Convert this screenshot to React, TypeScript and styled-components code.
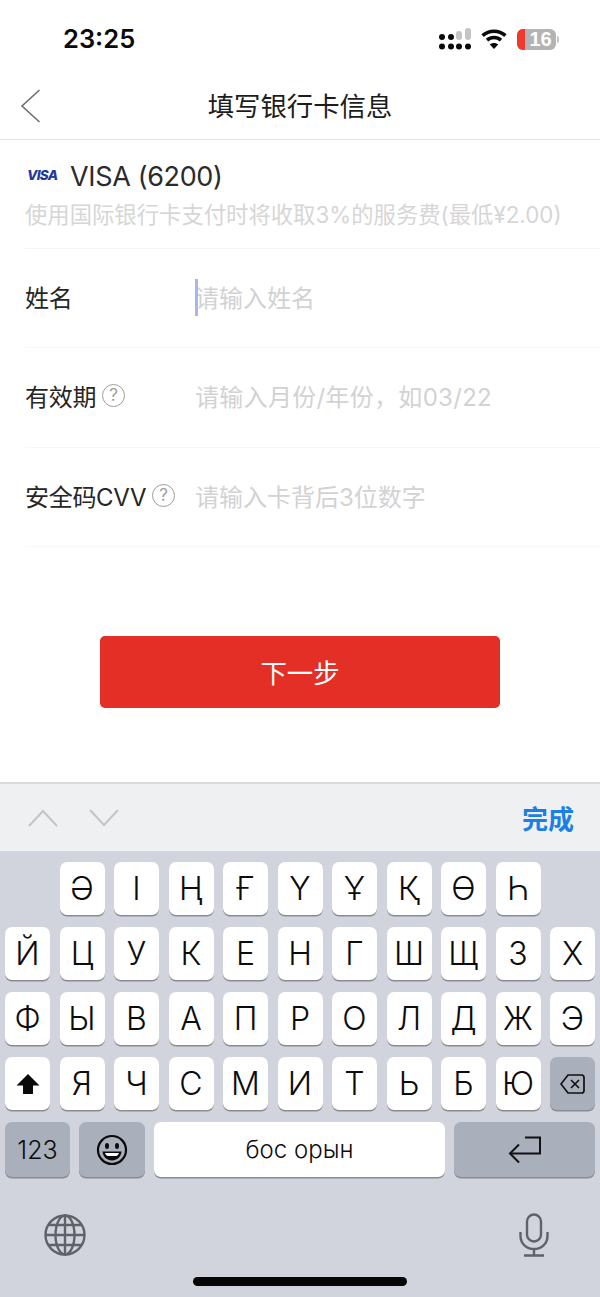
import styled, { createGlobalStyle } from 'styled-components';

const GlobalStyle = createGlobalStyle`
    html, body {
        margin: 0;
        padding: 0;
        background: #fff;
    }
    * {
        box-sizing: border-box;
    }
`;

const cjk = `Inter, "Noto Sans CJK SC", sans-serif`;
const keyFont = `Inter, Roboto, "Noto Sans", sans-serif`;

const Page = styled.div`
    width: 600px;
    height: 1297px;
    display: flex;
    flex-direction: column;
    overflow: hidden;
    background: #fff;
    font-family: ${cjk};
`;

const StatusBar = styled.div`
    height: 72px;
    flex: none;
    display: flex;
    align-items: center;
    justify-content: space-between;
    padding: 6px 41px 0 63px;
`;
const Time = styled.div`
    font: 600 25.5px/1 ${keyFont};
    color: #0a0a0a;
`;
const StatusIcons = styled.div`
    display: flex;
    align-items: center;
    gap: 10px;
`;
const Battery = styled.div`
    width: 39px;
    height: 21px;
    border-radius: 6px;
    overflow: hidden;
    background: #b3b3b3;
    display: flex;
`;
const BatteryLevel = styled.div`
    width: 8px;
    background: #f0392e;
`;
const BatteryText = styled.div`
    flex: 1;
    text-align: center;
    color: #fff;
    font: 700 20px/21px "Liberation Sans", sans-serif;
`;
const BatteryWrap = styled.div`
    display: flex;
    align-items: center;
    gap: 1px;
    &::after {
        content: '';
        width: 2px;
        height: 7px;
        border-radius: 0 2px 2px 0;
        background: #c4c4c4;
    }
`;

const NavBar = styled.div`
    height: 68px;
    flex: none;
    display: flex;
    align-items: center;
    justify-content: center;
    position: relative;
    border-bottom: 1px solid #e2e2e2;
`;
const BackIcon = styled.svg`
    position: absolute;
    left: 20px;
    top: 17px;
`;
const Title = styled.div`
    font-size: 26.4px;
    line-height: 36px;
    color: #1c1c1c;
`;

const Form = styled.div`
    flex: 1;
    padding-left: 25px;
`;
const CardInfo = styled.div`
    height: 109px;
    padding-top: 18px;
    border-bottom: 1px solid #f5f5f5;
`;
const CardLine = styled.div`
    display: flex;
    align-items: center;
    height: 36px;
`;
const VisaLogo = styled.span`
    width: 45px;
    padding-left: 2px;
    font: italic 800 13.5px/1 ${keyFont};
    letter-spacing: -0.7px;
    color: #22389f;
`;
const CardName = styled.span`
    font-size: 27px;
    color: #2b2b2b;
    letter-spacing: -0.35px;
`;
const Fee = styled.div`
    margin-top: 5px;
    font-size: 22.35px;
    line-height: 32px;
    white-space: nowrap;
    color: #d6d6d6;
`;
const Field = styled.div`
    height: 99.3px;
    display: flex;
    align-items: center;
    padding-bottom: 3px;
    border-bottom: 1px solid #f7f7f7;
`;
const Label = styled.div`
    width: 170px;
    flex: none;
    display: flex;
    align-items: center;
    gap: 6px;
    font-size: 24px;
    color: #262626;
`;
const LabelText = styled.span`
    letter-spacing: -0.3px;
`;
const Help = styled.span`
    width: 23px;
    height: 23px;
    flex: none;
    display: flex;
    align-items: center;
    justify-content: center;
    border: 1.5px solid #9c9c9c;
    border-radius: 50%;
    color: #9c9c9c;
    font-size: 17px;
    line-height: 1;
`;
const Placeholder = styled.div<{ $tracking?: number }>`
    position: relative;
    font-size: 24px;
    letter-spacing: ${(p) => p.$tracking ?? 0}px;
    color: #d2d2d2;
    white-space: nowrap;
`;
const Caret = styled.span`
    position: absolute;
    left: 0;
    top: 0;
    width: 2.5px;
    height: 37px;
    background: #a9b6ee;
`;
const NextButton = styled.div`
    width: 400px;
    height: 72px;
    margin: 89px 0 0 75px;
    display: flex;
    align-items: center;
    justify-content: center;
    border-radius: 5px;
    background: #e32f25;
    color: #fff;
    font-size: 26.4px;
`;

const Toolbar = styled.div`
    height: 69px;
    flex: none;
    display: flex;
    align-items: center;
    justify-content: space-between;
    padding: 0 26px 0 28px;
    background: #eef0f2;
    border-top: 2px solid #d8d9db;
`;
const Arrows = styled.div`
    display: flex;
    gap: 31px;
`;
const Done = styled.div`
    font-size: 26px;
    font-weight: 600;
    color: #1a80e6;
`;

const Keyboard = styled.div`
    height: 446px;
    flex: none;
    position: relative;
    background: #d1d4dc;
    padding: 11px 5px 0;
    font-family: ${keyFont};
    display: flex;
    flex-direction: column;
    gap: 12px;
`;
const Row = styled.div`
    display: flex;
    justify-content: center;
    gap: 9.5px;
`;
const Key = styled.div<{ $dark?: boolean; $w?: number; $h?: number; $size?: number }>`
    width: ${(p) => p.$w ?? 45}px;
    height: ${(p) => p.$h ?? 53}px;
    flex: none;
    display: flex;
    align-items: center;
    justify-content: center;
    border-radius: 7px;
    background: ${(p) => (p.$dark ? '#a9afbb' : '#fff')};
    box-shadow: 0 1.5px 0 #898b90;
    color: #0c0c0c;
    font-size: ${(p) => p.$size ?? 32}px;
    font-weight: 300;
`;
const BottomRow = styled.div`
    display: flex;
    gap: 9px;
`;
const ExtraRow = styled.div`
    display: flex;
    align-items: center;
    justify-content: space-between;
    padding: 24px 46px 0 39px;
`;
const HomeIndicator = styled.div`
    position: absolute;
    left: 193px;
    bottom: 11px;
    width: 214px;
    height: 9px;
    border-radius: 5px;
    background: #060606;
`;

const rows = [
    ['Ə', 'І', 'Ң', 'Ғ', 'Ү', 'Ұ', 'Қ', 'Ө', 'Һ'],
    ['Й', 'Ц', 'У', 'К', 'Е', 'Н', 'Г', 'Ш', 'Щ', 'З', 'Х'],
    ['Ф', 'Ы', 'В', 'А', 'П', 'Р', 'О', 'Л', 'Д', 'Ж', 'Э'],
];
const lastLetters = ['Я', 'Ч', 'С', 'М', 'И', 'Т', 'Ь', 'Б', 'Ю'];

const Signal = () => (
    <svg width="32" height="22" viewBox="0 0 32 22">
        <rect x="17" y="3" width="6" height="9" rx="3" fill="#c4c4c4" />
        <rect x="26" y="0" width="6" height="12" rx="3" fill="#c4c4c4" />
        <rect x="9" y="6" width="6" height="6" rx="3" fill="#0a0a0a" />
        <circle cx="3" cy="9" r="3" fill="#0a0a0a" />
        {[3, 12, 20, 29].map((x) => (
            <circle key={x} cx={x} cy="18.500" r="3" fill="#0a0a0a" />
        ))}
    </svg>
);

const Wifi = () => (
    <svg width="26" height="20" viewBox="0 0 26 20" fill="none" stroke="#0a0a0a" strokeWidth="3.6">
        <path d="M1.600 6.600C8 .7 18 .7 24.400 6.600" />
        <path d="M6 11.200c4-3.600 10-3.600 14 0" />
        <path d="M13 20l-4.200-4.600c2.400-2 6-2 8.400 0z" fill="#0a0a0a" stroke="none" />
    </svg>
);

const Chevron = ({ up }: { up?: boolean }) => (
    <svg width="30" height="20" viewBox="0 0 30 20" fill="none" stroke="#c2c4c7" strokeWidth="2">
        <path d={up ? 'M1 18L15 3l14 15' : 'M1 2l14 15L29 2'} />
    </svg>
);

const Shift = () => (
    <svg width="24" height="22" viewBox="0 0 24 22" fill="#0a0a0a">
        <path d="M12 1l11.500 11.500H17V21H7v-8.500H.5z" />
    </svg>
);

const Backspace = () => (
    <svg width="25" height="22" viewBox="0 0 25 22" fill="none" stroke="#111" strokeWidth="1.700">
        <path d="M8 2h13.500a2.500 2.500 0 0 1 2.500 2.500v13a2.500 2.500 0 0 1-2.500 2.500H8L1 11z" />
        <path d="M11 7l8 8M19 7l-8 8" />
    </svg>
);

const Smile = () => (
    <svg width="32" height="32" viewBox="0 0 32 32" fill="none">
        <circle cx="16" cy="16" r="14" stroke="#0a0a0a" strokeWidth="2.200" />
        <ellipse cx="11" cy="12" rx="2" ry="3" fill="#0a0a0a" />
        <ellipse cx="21" cy="12" rx="2" ry="3" fill="#0a0a0a" />
        <path d="M6.500 17.500h19C25 23 21 26.500 16 26.500S7 23 6.500 17.500z" fill="#0a0a0a" />
        <path d="M9 19h14c-.6 1.500-1.500 2.500-2.500 3h-9C10.500 21.500 9.500 20.500 9 19z" fill="#fff" />
    </svg>
);

const ReturnIcon = () => (
    <svg width="33" height="28" viewBox="0 0 33 28" fill="none" stroke="#111" strokeWidth="2">
        <path d="M17 1.500h15v16H2" />
        <path d="M11 8.500l-9 9 9 9" />
    </svg>
);

const Globe = () => (
    <svg width="42" height="42" viewBox="0 0 42 42" fill="none" stroke="#5f6269" strokeWidth="2.400">
        <circle cx="21" cy="21" r="19.500" />
        <ellipse cx="21" cy="21" rx="9.500" ry="19.500" />
        <path d="M21 1.500v39M1.500 21h39M4.500 11h33M4.500 31h33" />
    </svg>
);

const Mic = () => (
    <svg width="30" height="44" viewBox="0 0 30 44" fill="none" stroke="#5f6269" strokeWidth="2.400">
        <rect x="8" y="1.500" width="14" height="27" rx="7" />
        <path d="M1.500 19v4c0 7.500 6 13 13.500 13s13.500-5.500 13.500-13v-4" />
        <path d="M15 36v6.500M5 42.500h20" />
    </svg>
);

const expiryHint = '请输入月份/年份\uFF0C如03/22';

export default function App() {
    return (
        <Page>
            <GlobalStyle />
            <StatusBar>
                <Time>23:25</Time>
                <StatusIcons>
                    <Signal />
                    <Wifi />
                    <BatteryWrap>
                        <Battery>
                            <BatteryLevel />
                            <BatteryText>16</BatteryText>
                        </Battery>
                    </BatteryWrap>
                </StatusIcons>
            </StatusBar>
            <NavBar>
                <BackIcon width="21" height="34" viewBox="0 0 21 34" fill="none" stroke="#6e6e6e" strokeWidth="1.600">
                    <path d="M19.500 1L2 17l17.500 16" />
                </BackIcon>
                <Title>填写银行卡信息</Title>
            </NavBar>
            <Form>
                <CardInfo>
                    <CardLine>
                        <VisaLogo>VISA</VisaLogo>
                        <CardName>VISA (6200)</CardName>
                    </CardLine>
                    <Fee>使用国际银行卡支付时将收取3%的服务费(最低¥2.00)</Fee>
                </CardInfo>
                <Field>
                    <Label>
                        <LabelText>姓名</LabelText>
                    </Label>
                    <Placeholder>
                        <Caret />
                        请输入姓名
                    </Placeholder>
                </Field>
                <Field>
                    <Label>
                        <LabelText>有效期</LabelText>
                        <Help>?</Help>
                    </Label>
                    <Placeholder $tracking={0.3}>{expiryHint}</Placeholder>
                </Field>
                <Field>
                    <Label>
                        <LabelText>安全码CVV</LabelText>
                        <Help>?</Help>
                    </Label>
                    <Placeholder>请输入卡背后3位数字</Placeholder>
                </Field>
                <NextButton>下一步</NextButton>
            </Form>
            <Toolbar>
                <Arrows>
                    <Chevron up />
                    <Chevron />
                </Arrows>
                <Done>完成</Done>
            </Toolbar>
            <Keyboard>
                {rows.map((row, i) => (
                    <Row key={i}>
                        {row.map((letter) => (
                            <Key key={letter}>{letter}</Key>
                        ))}
                    </Row>
                ))}
                <Row>
                    <Key>
                        <Shift />
                    </Key>
                    {lastLetters.map((letter) => (
                        <Key key={letter}>{letter}</Key>
                    ))}
                    <Key $dark>
                        <Backspace />
                    </Key>
                </Row>
                <BottomRow>
                    <Key $dark $w={65} $h={55} $size={25}>
                        123
                    </Key>
                    <Key $dark $w={66} $h={55}>
                        <Smile />
                    </Key>
                    <Key $w={291} $h={55} $size={24}>
                        бос орын
                    </Key>
                    <Key $dark $w={141} $h={55}>
                        <ReturnIcon />
                    </Key>
                </BottomRow>
                <ExtraRow>
                    <Globe />
                    <Mic />
                </ExtraRow>
                <HomeIndicator />
            </Keyboard>
        </Page>
    );
}
